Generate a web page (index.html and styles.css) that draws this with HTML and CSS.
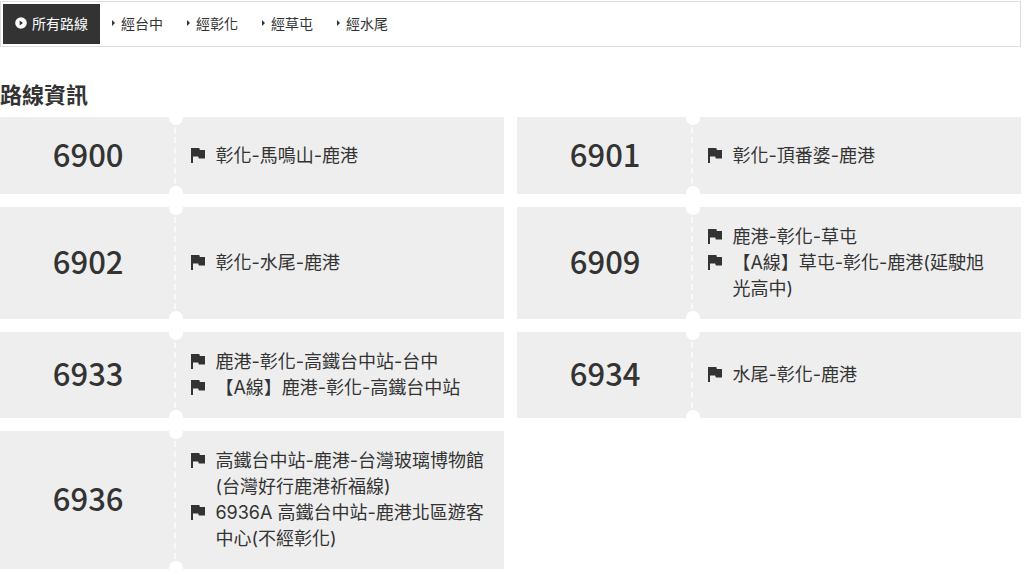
FILE: index.html
```html
<!DOCTYPE html>
<html lang="zh-Hant">
<head>
    <meta charset="UTF-8">
    <meta name="viewport" content="width=device-width, initial-scale=1.0">
    <title>路線資訊</title>
    <link rel="stylesheet" href="styles.css">
</head>
<body>
    <svg class="sprite" aria-hidden="true">
        <symbol id="flag" viewBox="0 0 14 15">
            <path d="M0 0h8.3l.6 2H14v8.5H7.8l-.6-2H2V15H0z"/>
        </symbol>
    </svg>

    <nav class="tabs">
        <a class="tab active" href="#">
            <svg class="icon-circle" viewBox="0 0 12 12" aria-hidden="true"><circle cx="6" cy="6" r="5.8" fill="#fff"/><path d="M4.6 3.5L8 6 4.6 8.5z" fill="#333"/></svg>
            所有路線
        </a>
        <a class="tab" href="#">經台中</a>
        <a class="tab" href="#">經彰化</a>
        <a class="tab" href="#">經草屯</a>
        <a class="tab" href="#">經水尾</a>
    </nav>

    <h2 class="title">路線資訊</h2>

    <div class="routes">
        <div class="route">
            <div class="number">6900</div>
            <ul class="lines">
                <li><svg class="flag"><use href="#flag"/></svg>彰化-馬鳴山-鹿港</li>
            </ul>
        </div>
        <div class="route">
            <div class="number">6901</div>
            <ul class="lines">
                <li><svg class="flag"><use href="#flag"/></svg>彰化-頂番婆-鹿港</li>
            </ul>
        </div>
        <div class="route">
            <div class="number">6902</div>
            <ul class="lines">
                <li><svg class="flag"><use href="#flag"/></svg>彰化-水尾-鹿港</li>
            </ul>
        </div>
        <div class="route">
            <div class="number">6909</div>
            <ul class="lines">
                <li><svg class="flag"><use href="#flag"/></svg>鹿港-彰化-草屯</li>
                <li><svg class="flag"><use href="#flag"/></svg>【A線】草屯-彰化-鹿港(延駛旭<br>光高中)</li>
            </ul>
        </div>
        <div class="route">
            <div class="number">6933</div>
            <ul class="lines">
                <li><svg class="flag"><use href="#flag"/></svg>鹿港-彰化-高鐵台中站-台中</li>
                <li><svg class="flag"><use href="#flag"/></svg>【A線】鹿港-彰化-高鐵台中站</li>
            </ul>
        </div>
        <div class="route">
            <div class="number">6934</div>
            <ul class="lines">
                <li><svg class="flag"><use href="#flag"/></svg>水尾-彰化-鹿港</li>
            </ul>
        </div>
        <div class="route">
            <div class="number">6936</div>
            <ul class="lines">
                <li><svg class="flag"><use href="#flag"/></svg>高鐵台中站-鹿港-台灣玻璃博物館(台灣好行鹿港祈福線)</li>
                <li><svg class="flag"><use href="#flag"/></svg>6936A 高鐵台中站-鹿港北區遊客中心(不經彰化)</li>
            </ul>
        </div>
    </div>
</body>
</html>
```

FILE: styles.css
```css
* {
    box-sizing: border-box;
    margin: 0;
    padding: 0;
}

body {
    font-family: Inter, "Noto Sans CJK TC", sans-serif;
    color: #333;
    background-color: #fff;
    padding: 1px 3px 0 0;
}

.sprite {
    display: none;
}

.tabs {
    display: flex;
    border: 1px solid #ddd;
    padding: 2px;
}

.tab {
    display: flex;
    align-items: center;
    height: 40px;
    padding: 0 12px 2px;
    font-size: 14px;
    color: #333;
    text-decoration: none;
}

.tab:not(.active)::before {
    content: "";
    margin-right: 6px;
    border-left: 3px solid #333;
    border-top: 3px solid transparent;
    border-bottom: 3px solid transparent;
}

.tab.active {
    color: #fff;
    background-color: #333;
}

.icon-circle {
    width: 12px;
    height: 12px;
    margin-right: 5px;
}

.title {
    margin-top: 32px;
    font-size: 22px;
    line-height: 32px;
    margin-bottom: 6px;
}

.routes {
    display: grid;
    grid-template-columns: 1fr 1fr;
    gap: 13px;
}

.route {
    position: relative;
    display: flex;
    align-items: center;
    min-height: 77px;
    background-color: #eee;
}

/* round notches at both ends of the tear line */
.route::before,
.route::after {
    content: "";
    position: absolute;
    left: 35%;
    width: 14px;
    height: 14px;
    margin-left: -7px;
    border-radius: 50%;
    background-color: #fff;
}

.route::before {
    top: -6px;
}

.route::after {
    bottom: -6px;
}

.number {
    display: flex;
    align-items: center;
    justify-content: center;
    align-self: stretch;
    width: 35%;
    padding: 0 0 4px 2px;
    border-right: 2px dashed #f9f9f9;
    font-family: "Noto Sans CJK TC", sans-serif;
    font-size: 31px;
    font-weight: 500;
    line-height: 40px;
}

.lines {
    flex: 1;
    padding: 17px 15px;
    list-style: none;
    font-size: 18px;
    line-height: 26px;
}

.lines li {
    position: relative;
    padding-left: 24px;
}

.flag {
    position: absolute;
    left: 0;
    top: 5px;
    width: 14px;
    height: 15px;
    fill: #333;
}
```
